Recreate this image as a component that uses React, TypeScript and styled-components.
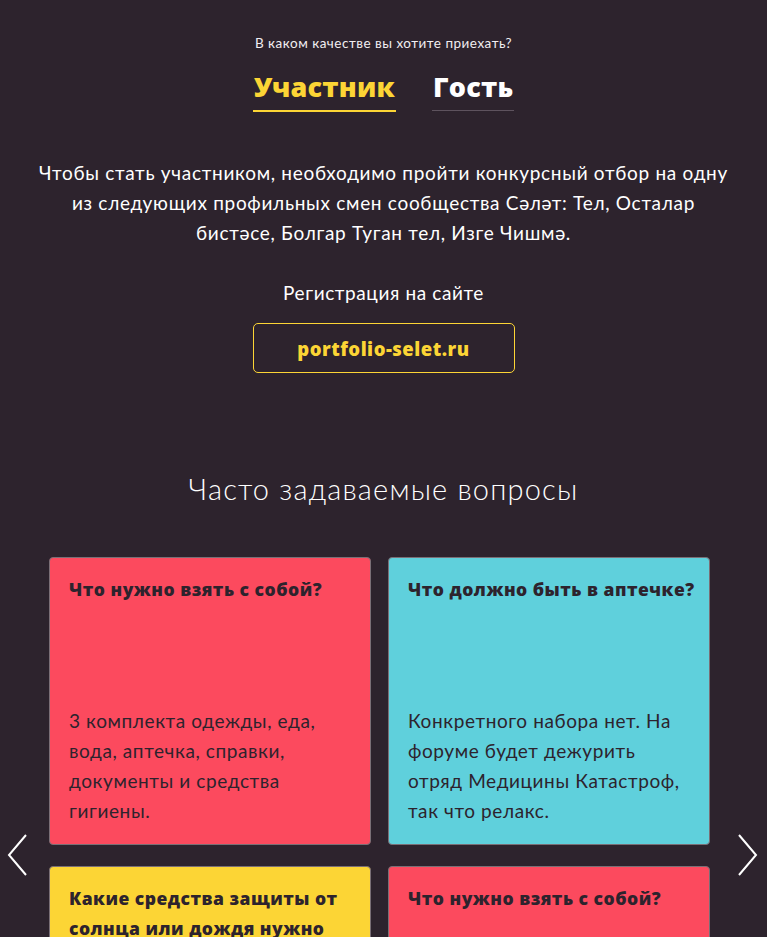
import React from "react";
import styled, { createGlobalStyle } from "styled-components";

const Global = createGlobalStyle`
  html, body { margin: 0; padding: 0; background: #2d232d; overflow: hidden; }
  body { font-family: Lato, "Open Sans", sans-serif; color: #fff; }
  * { box-sizing: border-box; }
`;

const Page = styled.div`
  width: 767px;
  height: 937px;
  overflow: hidden;
  background: #2d232d;
  display: flex;
  flex-direction: column;
  align-items: center;
  padding-top: 34px;
  & > * { flex-shrink: 0; }
`;

const Question = styled.div`
  font-size: 13.5px;
  line-height: 18px;
  letter-spacing: 0.5px;
  color: #f1eef1;
`;

const Tabs = styled.div`
  display: flex;
  gap: 36px;
  margin-top: 18px;
`;

const Tab = styled.div<{ $active?: boolean }>`
  font-family: "Open Sans", sans-serif;
  font-weight: 800;
  font-size: 27px;
  line-height: 34px;
  letter-spacing: 0.2px;
  color: ${(p) => (p.$active ? "#fcd535" : "#ffffff")};
  padding: 0 1px 6px;
  border-bottom: ${(p) => (p.$active ? "2px solid #fcd535" : "1px solid #5e535e")};
  height: ${(p) => (p.$active ? "42px" : "41px")};
`;

const Lead = styled.p`
  margin: 46px 0 0;
  width: 705px;
  text-align: center;
  font-size: 19px;
  line-height: 30px;
  letter-spacing: 0.7px;
  color: #fff;
`;

const RegLabel = styled.div`
  margin-top: 33px;
  font-size: 19px;
  line-height: 24px;
  letter-spacing: 0.6px;
  color: #fff;
`;

const SiteButton = styled.a`
  margin-top: 18px;
  width: 262px;
  height: 50px;
  border: 1px solid #fcd535;
  border-radius: 5px;
  display: flex;
  align-items: center;
  justify-content: center;
  color: #fcd535;
  font-family: "Open Sans", sans-serif;
  font-weight: 800;
  font-size: 18.5px;
  letter-spacing: 0.5px;
  text-decoration: none;
`;

const FaqTitle = styled.h2`
  margin: 98px 0 0;
  font-weight: 300;
  font-size: 29px;
  line-height: 36px;
  letter-spacing: 1.2px;
  color: #fff;
`;

const Slider = styled.div`
  position: relative;
  width: 767px;
  margin-top: 50px;
  padding-left: 49px;
`;

const Grid = styled.div`
  display: grid;
  grid-template-columns: 322px 322px;
  column-gap: 17px;
  row-gap: 21px;
`;

const Card = styled.div<{ $bg: string }>`
  background: ${(p) => p.$bg};
  border: 1px solid #7a6f76;
  border-radius: 4px;
  height: 288px;
  padding: 16px 10px 18px 19px;
  display: flex;
  flex-direction: column;
  justify-content: space-between;
  color: #2d232d;
`;

const CardTitle = styled.div`
  font-family: "Open Sans", sans-serif;
  font-weight: 800;
  font-size: 17.5px;
  line-height: 30px;
  letter-spacing: 0.5px;
`;

const CardText = styled.div`
  padding-right: 14px;
  font-size: 19px;
  line-height: 30px;
  letter-spacing: 0.6px;
`;

const Arrow = styled.button<{ $side: "left" | "right" }>`
  position: absolute;
  top: 276px;
  ${(p) => (p.$side === "left" ? "left: 6px;" : "right: 8px;")}
  width: 24px;
  height: 44px;
  padding: 0;
  border: 0;
  background: transparent;
  cursor: pointer;
`;

const Chevron = ({ dir }: { dir: "left" | "right" }) => (
  <svg width="24" height="44" viewBox="0 0 24 44" fill="none">
    <polyline
      points={dir === "left" ? "20,2 3,22 20,42" : "4,2 21,22 4,42"}
      stroke="#fff"
      strokeWidth="2"
      fill="none"
    />
  </svg>
);

const cards = [
  {
    bg: "#fc4a5e",
    title: "Что нужно взять с собой?",
    text: "3 комплекта одежды, еда, вода, аптечка, справки, документы и средства гигиены.",
  },
  {
    bg: "#5fd0dc",
    title: "Что должно быть в аптечке?",
    text: "Конкретного набора нет. На форуме будет дежурить отряд Медицины Катастроф, так что релакс.",
  },
  {
    bg: "#fcd535",
    title: "Какие средства защиты от солнца или дождя нужно взять?",
    text: "",
  },
  {
    bg: "#fc4a5e",
    title: "Что нужно взять с собой?",
    text: "",
  },
];

export default function App() {
  return (
    <>
      <Global />
      <Page>
        <Question>В каком качестве вы хотите приехать?</Question>
        <Tabs>
          <Tab $active>Участник</Tab>
          <Tab>Гость</Tab>
        </Tabs>
        <Lead>
          Чтобы стать участником, необходимо пройти конкурсный отбор на одну из следующих
          профильных смен сообщества Сәләт: Тел, Осталар бистәсе, Болгар Туган тел, Изге Чишмә.
        </Lead>
        <RegLabel>Регистрация на сайте</RegLabel>
        <SiteButton href="#">portfolio-selet.ru</SiteButton>
        <FaqTitle>Часто задаваемые вопросы</FaqTitle>
        <Slider>
          <Grid>
            {cards.map((c, i) => (
              <Card key={i} $bg={c.bg}>
                <CardTitle>{c.title}</CardTitle>
                <CardText>{c.text}</CardText>
              </Card>
            ))}
          </Grid>
          <Arrow $side="left" aria-label="prev">
            <Chevron dir="left" />
          </Arrow>
          <Arrow $side="right" aria-label="next">
            <Chevron dir="right" />
          </Arrow>
        </Slider>
      </Page>
    </>
  );
}
